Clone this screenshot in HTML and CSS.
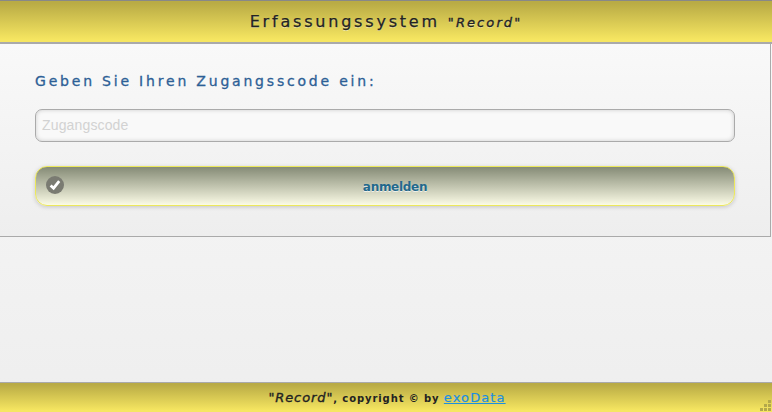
FILE: index.html
```html
<!DOCTYPE html>
<html lang="de">
<head>
<meta charset="utf-8">
<title>Erfassungssystem "Record"</title>
<link rel="stylesheet" href="styles.css">
</head>
<body>
<div class="page">
  <header class="bar header">
    <h1 class="title">Erfassungssystem <span class="title-sub">"Record"</span></h1>
  </header>
  <main class="panel">
    <label class="prompt" for="code">Geben Sie Ihren Zugangsscode ein:</label>
    <input class="code-input" id="code" type="text" placeholder="Zugangscode">
    <button class="login" type="button">
      <span class="login-icon">
        <svg viewBox="0 0 18 18" width="18" height="18"><circle cx="9" cy="9" r="9" fill="#7a7b72"/><path d="M4.6 9.4l3 2.8 5.6-7" fill="none" stroke="#fff" stroke-width="2.8"/></svg>
      </span>
      <span class="login-label">anmelden</span>
    </button>
  </main>
  <div class="spacer"></div>
  <footer class="bar footer">
    <span class="foot-text"><span class="foot-name">"Record"</span>, copyright © by <a class="foot-link" href="#">exoData</a></span>
    <svg class="grip" viewBox="0 0 12 12" width="12" height="12"><g fill="#b3a84b"><rect x="8" y="0" width="3" height="3"/><rect x="4" y="4" width="3" height="3"/><rect x="8" y="4" width="3" height="3"/><rect x="0" y="8" width="3" height="3"/><rect x="4" y="8" width="3" height="3"/><rect x="8" y="8" width="3" height="3"/></g></svg>
  </footer>
</div>
</body>
</html>
```
FILE: styles.css
```css
* { box-sizing: border-box; }
html, body { margin: 0; padding: 0; height: 100%; }
body { font-family: "DejaVu Sans", Verdana, sans-serif; background: #f1f1f1; overflow: hidden; }
.page { display: flex; flex-direction: column; height: 412px; width: 772px; background: linear-gradient(#f9f9f9, #eeeeee); }
.bar { display: flex; justify-content: center; align-items: center; background: linear-gradient(#b9ab45 5%, #f6e661 95%); flex: none; }
.header { height: 44px; border-top: 1px solid #888; border-bottom: 2px solid #aaa; }
.title { margin: 0; font-size: 16px; font-weight: 400; letter-spacing: 2.8px; color: #222; -webkit-text-stroke: 0.25px #222; text-shadow: 0 1px 0 rgba(255,255,255,.45); }
.title-sub { font-size: 13px; font-style: italic; font-weight: 400; letter-spacing: 2.1px; -webkit-text-stroke: 0.35px #222; }
.panel { flex: none; height: 193px; display: flex; flex-direction: column; padding: 29px 35px 0; border-right: 1px solid #aaa; border-bottom: 1px solid #aaa; margin-right: 1px; background: linear-gradient(#f9f9f9, #eeeeee); }
.prompt { font-size: 14px; line-height: 16px; font-weight: 400; letter-spacing: 2.8px; color: #2d5f96; -webkit-text-stroke: 0.3px #2d5f96; }
.code-input { margin-top: 20px; height: 33px; width: 700px; border: 1px solid #aaa; border-radius: 7px; background: #f9f9f9; box-shadow: inset 0 0 4px rgba(0,0,0,.18); padding: 0 6px 2px; font-family: "Liberation Sans", Arial, sans-serif; font-size: 14px; letter-spacing: .15px; outline: none; }
.code-input::placeholder { color: #d2d2d2; opacity: 1; }
.login { position: relative; margin-top: 24px; height: 40px; width: 700px; border: 1.5px solid #ece85c; border-radius: 12px; background: linear-gradient(#858b76, #fbfbe6); box-shadow: 0 1px 4px rgba(0,0,0,.18); padding: 2px 0 0; display: flex; align-items: center; justify-content: center; font-family: "DejaVu Sans", Verdana, sans-serif; cursor: pointer; }
.login-icon { position: absolute; left: 9.5px; top: 8.5px; width: 18px; height: 18px; display: block; }
.login-icon svg { display: block; }
.login-label { font-size: 12px; font-weight: 700; color: #22688c; letter-spacing: -.3px; text-shadow: 0 1px 0 rgba(255,255,255,.7); position: relative; left: 10px; }
.spacer { flex: 1; }
.footer { position: relative; height: 30px; border-top: 1px solid #aaa; padding-bottom: 1px; }
.foot-text { font-size: 10px; font-weight: 700; letter-spacing: .9px; color: #222; position: relative; left: 1px; }
.foot-name { font-size: 13px; font-style: italic; font-weight: 400; letter-spacing: .9px; -webkit-text-stroke: 0.35px #222; }
.foot-link { font-size: 13px; font-weight: 400; color: #1c8fe0; letter-spacing: 1.1px; -webkit-text-stroke: 0.2px #1c8fe0; }
.grip { position: absolute; right: 0; bottom: 0; display: block; }
```
